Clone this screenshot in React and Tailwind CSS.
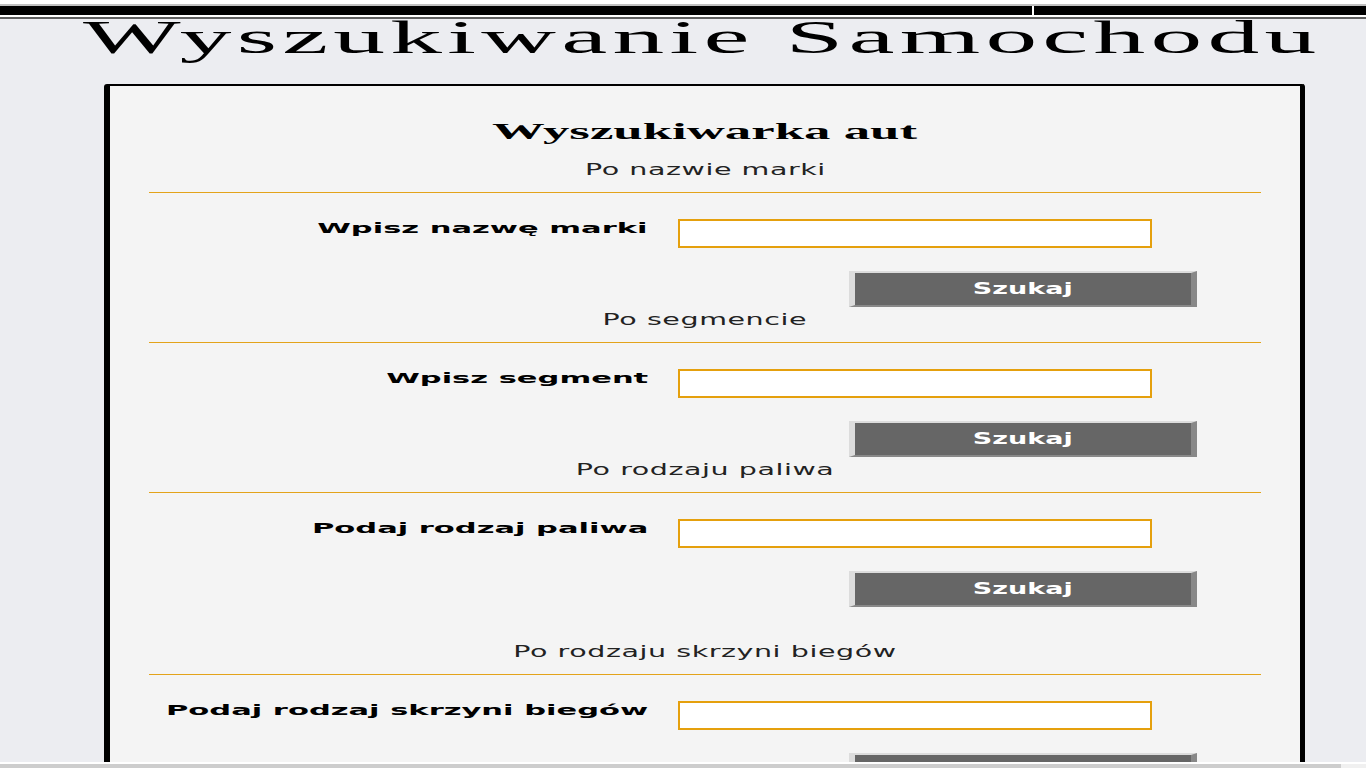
import React from "react";

const sans = "font-['DejaVu_Sans','Liberation_Sans',sans-serif]";
const serif = "font-['Liberation_Serif','DejaVu_Serif',serif]";

// the old page looks horizontally stretched, so text gets a scaleX
function Wide({ className, children }) {
  return <span className={`inline-block whitespace-nowrap ${className}`}>{children}</span>;
}

function SearchSection({ heading, label, extraTop }) {
  return (
    <div className={extraTop ? "mt-[36px]" : "mt-[4px]"}>
      <div className={`text-center leading-[18px] text-[15px] text-[#222] ${sans}`}>
        <Wide className="origin-center scale-x-[1.9] tracking-[0.3px]">{heading}</Wide>
      </div>
      <div className="mx-[39px] mt-[13px] h-px bg-[#e3a31a]" />

      <div className="mt-[26px] flex items-start">
        <label className={`w-[538px] shrink-0 text-right text-[14px] leading-[18px] font-bold text-black ${sans}`}>
          <Wide className="origin-right scale-x-[2.18]">{label}</Wide>
        </label>
        <input
          type="text"
          className="ml-[30px] h-[29px] w-[474px] border-2 border-[#e5a00d] bg-white outline-none"
        />
      </div>

      <div className="mt-[23px] pl-[739px]">
        <button
          className={`flex h-[36px] w-[348px] items-center justify-center border-l-[6px] border-t-2 border-r-[6px] border-b-2 border-l-[#dcdcdc] border-t-[#dcdcdc] border-r-[#888888] border-b-[#888888] bg-[#666666] text-[15px] font-bold text-white ${sans}`}
        >
          <Wide className="origin-center scale-x-[1.8]">Szukaj</Wide>
        </button>
      </div>
    </div>
  );
}

export default function App() {
  const sections = [
    { heading: "Po nazwie marki", label: "Wpisz nazwę marki" },
    { heading: "Po segmencie", label: "Wpisz segment" },
    { heading: "Po rodzaju paliwa", label: "Podaj rodzaj paliwa" },
    { heading: "Po rodzaju skrzyni biegów", label: "Podaj rodzaj skrzyni biegów", extraTop: true },
  ];

  return (
    <div className="flex h-screen flex-col overflow-hidden bg-[#ecedf1]">
      {/* --- top bars --- */}
      <div className="h-[4px] bg-white" />
      <div className="h-[2px] bg-[#c0c0c0]" />
      <div className="flex h-[9px]">
        <div className="w-[1032px] bg-black" />
        <div className="w-[2px] bg-white" />
        <div className="flex-1 bg-black" />
      </div>
      <div className="h-[2px] bg-white" />
      <div className="h-[2px] bg-[#5f5f5f]" />

      {/* --- title --- */}
      <h1 className={`pl-[83px] text-[47px] leading-[36px] font-normal text-black ${serif}`}>
        <Wide className="origin-left scale-x-[2.2] tracking-[2.4px]">Wyszukiwanie Samochodu</Wide>
      </h1>

      {/* --- search card --- */}
      <div className="ml-[104px] mt-[29px] w-[1201px] flex-1 overflow-hidden rounded-t-[3px] border-l-[6px] border-t-2 border-r-[5px] border-black bg-[#f4f4f4]">
        <h2 className={`mt-[31px] text-center text-[24px] leading-[28px] font-bold text-black ${serif}`}>
          <Wide className="origin-center scale-x-[2.2]">Wyszukiwarka aut</Wide>
        </h2>
        <div className="mt-[16px]">
          {sections.map((s) => (
            <SearchSection key={s.label} {...s} />
          ))}
        </div>
      </div>

      {/* --- bottom scrollbar strip --- */}
      <div className="h-[2px] bg-white" />
      <div className="flex h-[4px]">
        <div className="w-[1341px] bg-[#cdcdcd]" />
        <div className="flex-1 bg-[#f0f0f0]" />
      </div>
    </div>
  );
}
